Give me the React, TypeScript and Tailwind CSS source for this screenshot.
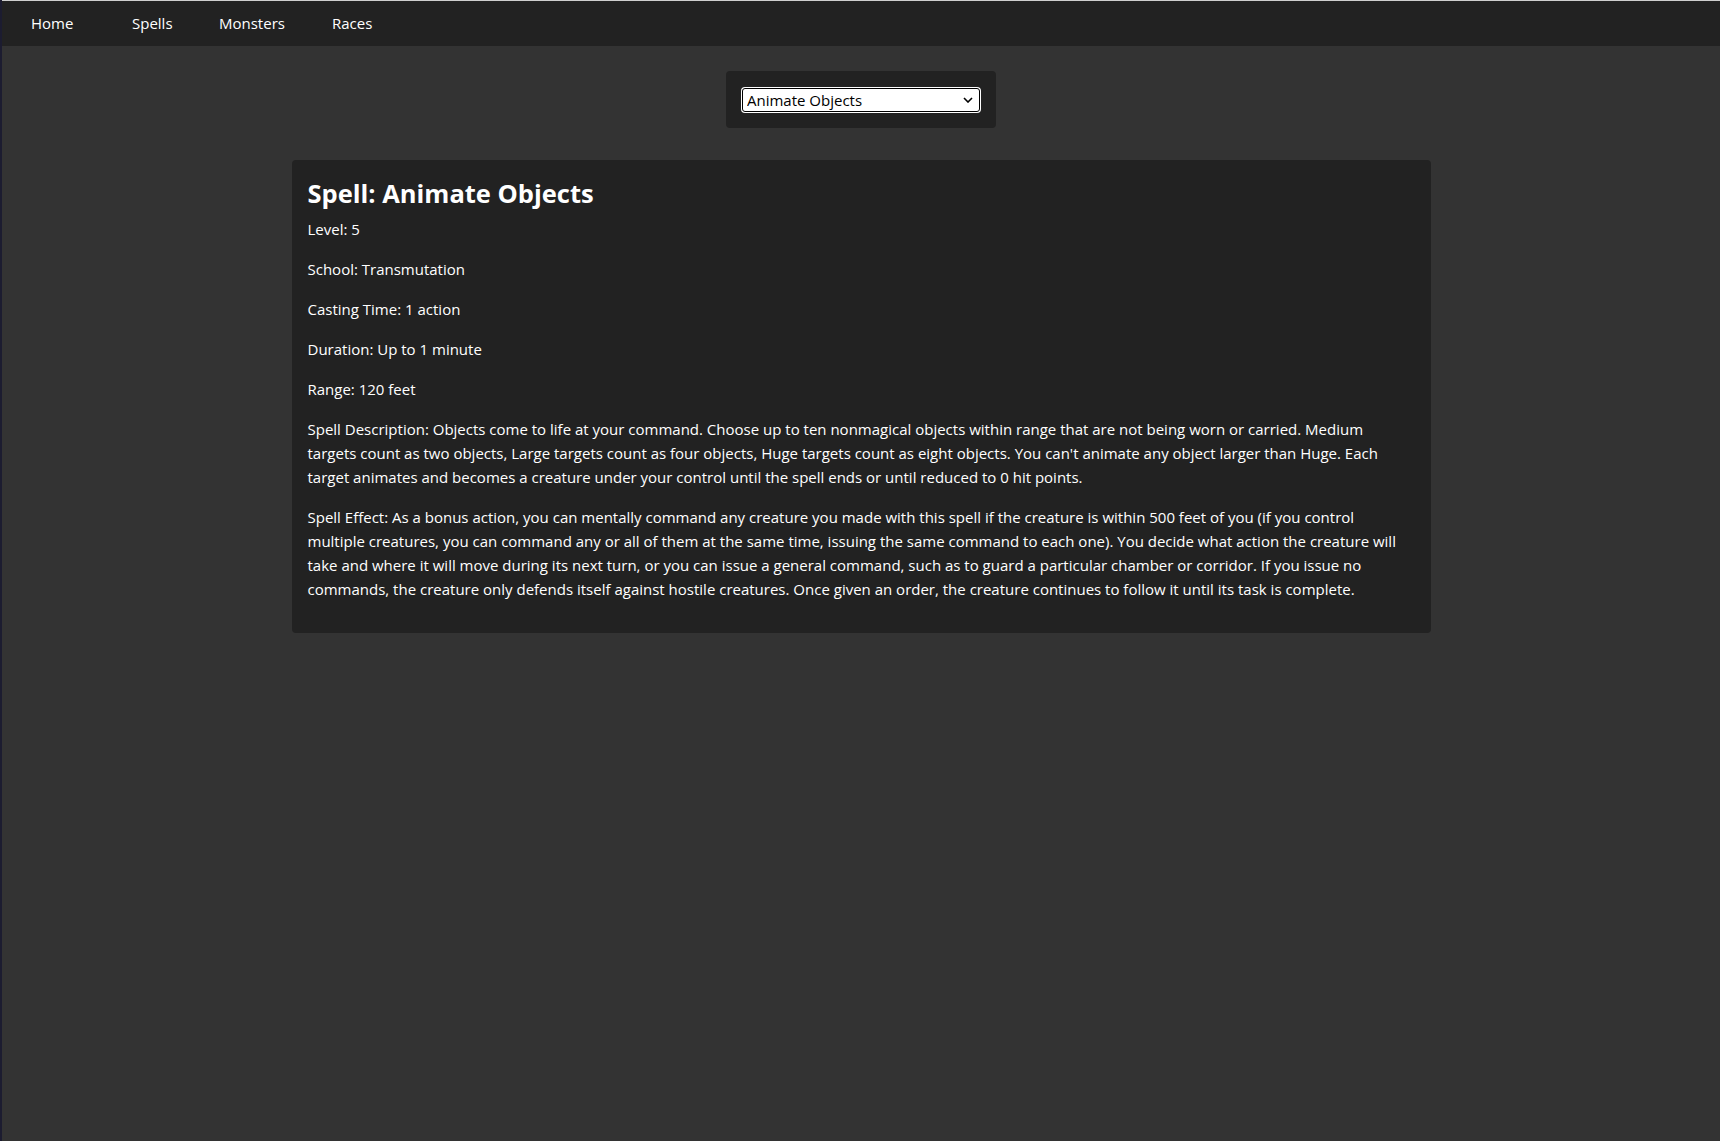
import { useState } from 'react';

const spell = {
  name: 'Animate Objects',
  level: 5,
  school: 'Transmutation',
  castingTime: '1 action',
  duration: 'Up to 1 minute',
  range: '120 feet',
  description:
    "Objects come to life at your command. Choose up to ten nonmagical objects within range that are not being worn or carried. Medium targets count as two objects, Large targets count as four objects, Huge targets count as eight objects. You can't animate any object larger than Huge. Each target animates and becomes a creature under your control until the spell ends or until reduced to 0 hit points.",
  effect:
    'As a bonus action, you can mentally command any creature you made with this spell if the creature is within 500 feet of you (if you control multiple creatures, you can command any or all of them at the same time, issuing the same command to each one). You decide what action the creature will take and where it will move during its next turn, or you can issue a general command, such as to guard a particular chamber or corridor. If you issue no commands, the creature only defends itself against hostile creatures. Once given an order, the creature continues to follow it until its task is complete.',
};

export default function App() {
  const [selected, setSelected] = useState(spell.name);

  return (
    <div className="min-h-[1141px] bg-[#333333] border-l-2 border-[#1c1c30] text-white font-['Open_Sans',sans-serif]">
      {/* Nav */}
      <nav className="h-[46px] bg-[#222222] border-t border-[#cfcfcf] flex items-center text-[15px]">
        <a className="ml-[29px] w-[101px]">Home</a>
        <a className="w-[87px]">Spells</a>
        <a className="w-[113px]">Monsters</a>
        <a>Races</a>
      </nav>

      {/* Spell picker */}
      <div className="mt-[25px] mx-auto w-[270px] bg-[#222222] rounded px-4 pt-[17px] pb-4">
        <select
          value={selected}
          onChange={(e) => setSelected(e.target.value)}
          className="block w-[238px] h-[24px] bg-white text-black text-[15px] leading-[20px] pl-1 border border-black rounded-[3px] ring-1 ring-white appearance-none bg-no-repeat"
          style={{
            backgroundImage:
              "url(\"data:image/svg+xml,%3Csvg xmlns='http://www.w3.org/2000/svg' width='10' height='6'%3E%3Cpath d='M1 1l4 4 4-4' fill='none' stroke='black' stroke-width='1.6'/%3E%3C/svg%3E\")",
            backgroundPosition: 'right 6px center',
          }}
        >
          <option>Animate Objects</option>
        </select>
      </div>

      {/* Spell card */}
      <div className="mt-8 mx-auto w-[1139px] bg-[#222222] rounded p-4 text-[15px] leading-6">
        <h2 className="text-[25.5px] font-bold leading-[34px] mb-[7px]">{`Spell: ${selected}`}</h2>
        <p className="mb-4">{`Level: ${spell.level}`}</p>
        <p className="mb-4">{`School: ${spell.school}`}</p>
        <p className="mb-4">{`Casting Time: ${spell.castingTime}`}</p>
        <p className="mb-4">{`Duration: ${spell.duration}`}</p>
        <p className="mb-4">{`Range: ${spell.range}`}</p>
        <p className="mb-4">{`Spell Description: ${spell.description}`}</p>
        <p className="mb-4">{`Spell Effect: ${spell.effect}`}</p>
      </div>
    </div>
  );
}
